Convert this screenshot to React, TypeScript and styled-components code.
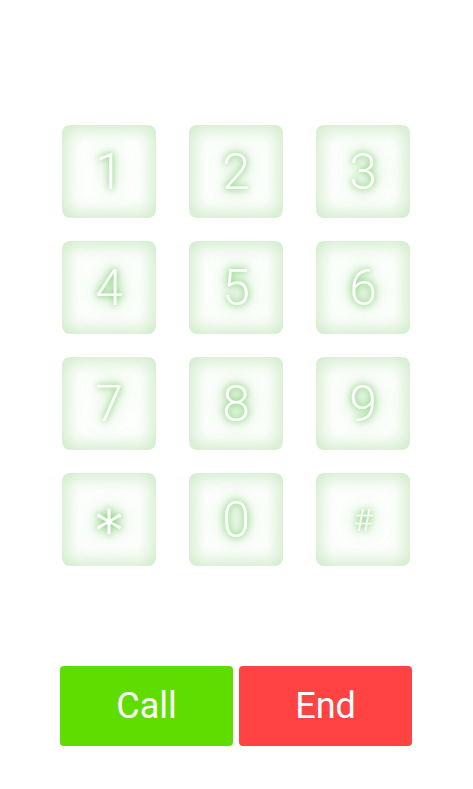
import React from 'react';
import styled, { createGlobalStyle } from 'styled-components';

const GlobalStyle = createGlobalStyle`
    html, body {
        margin: 0;
        padding: 0;
        background: #ffffff;
    }
    body {
        font-family: Roboto, "Liberation Sans", sans-serif;
    }
`;

const Screen = styled.div`
    width: 473px;
    height: 789px;
    display: flex;
    flex-direction: column;
    align-items: center;
    box-sizing: border-box;
    padding-top: 125px;
    padding-right: 1px;
`;

const Keypad = styled.div`
    display: grid;
    grid-template-columns: repeat(3, 94px);
    grid-auto-rows: 93px;
    column-gap: 33px;
    row-gap: 23px;
`;

const Key = styled.button`
    display: flex;
    align-items: center;
    justify-content: center;
    border: none;
    padding: 0;
    border-radius: 8px;
    background: #ffffff;
    box-shadow: inset 0 0 18px 4px rgba(130, 205, 115, 0.42);
    cursor: pointer;
`;

const Glyph = styled.span<{ size: number, shift: number, face: string, weight: number }>`
    display: block;
    font-family: ${props => props.face};
    font-weight: ${props => props.weight};
    font-size: ${props => props.size}px;
    line-height: 1;
    color: #ffffff;
    transform: translateY(${props => props.shift}px);
    text-shadow: 0 0 6px rgba(100, 195, 85, 0.9), 0 0 16px rgba(110, 200, 95, 0.75), 0 0 30px rgba(120, 205, 105, 0.5);
`;

const Actions = styled.div`
    display: flex;
    gap: 6px;
    margin-top: 100px;
`;

const ActionButton = styled.button<{ tone: string }>`
    width: 173px;
    height: 80px;
    border: none;
    border-radius: 4px;
    background-color: ${props => props.tone};
    color: #ffffff;
    font-family: Roboto, "Liberation Sans", sans-serif;
    font-size: 36px;
    cursor: pointer;
`;

const keys = ['1', '2', '3', '4', '5', '6', '7', '8', '9', '*', '0', '#'];

const glyphSize = (k: string) => k === '#' ? 32 : k === '*' ? 56 : 50;
const glyphShift = (k: string) => k === '*' ? 11 : 0;
const glyphWeight = (k: string) => k === '*' ? 400 : 300;
const glyphFace = (k: string) => k === '*'
    ? '"DejaVu Sans", sans-serif'
    : 'Roboto, "Liberation Sans", sans-serif';

const App: React.FC = () => {
    return (
        <>
            <GlobalStyle />
            <Screen>
                <Keypad>
                    {
                        keys.map(k =>
                            <Key key={k}>
                                <Glyph
                                    size={glyphSize(k)}
                                    shift={glyphShift(k)}
                                    weight={glyphWeight(k)}
                                    face={glyphFace(k)}
                                >
                                    {k}
                                </Glyph>
                            </Key>
                        )
                    }
                </Keypad>
                <Actions>
                    <ActionButton tone='#5fdd00'>Call</ActionButton>
                    <ActionButton tone='#ff4343'>End</ActionButton>
                </Actions>
            </Screen>
        </>
    )
};

export default App;
